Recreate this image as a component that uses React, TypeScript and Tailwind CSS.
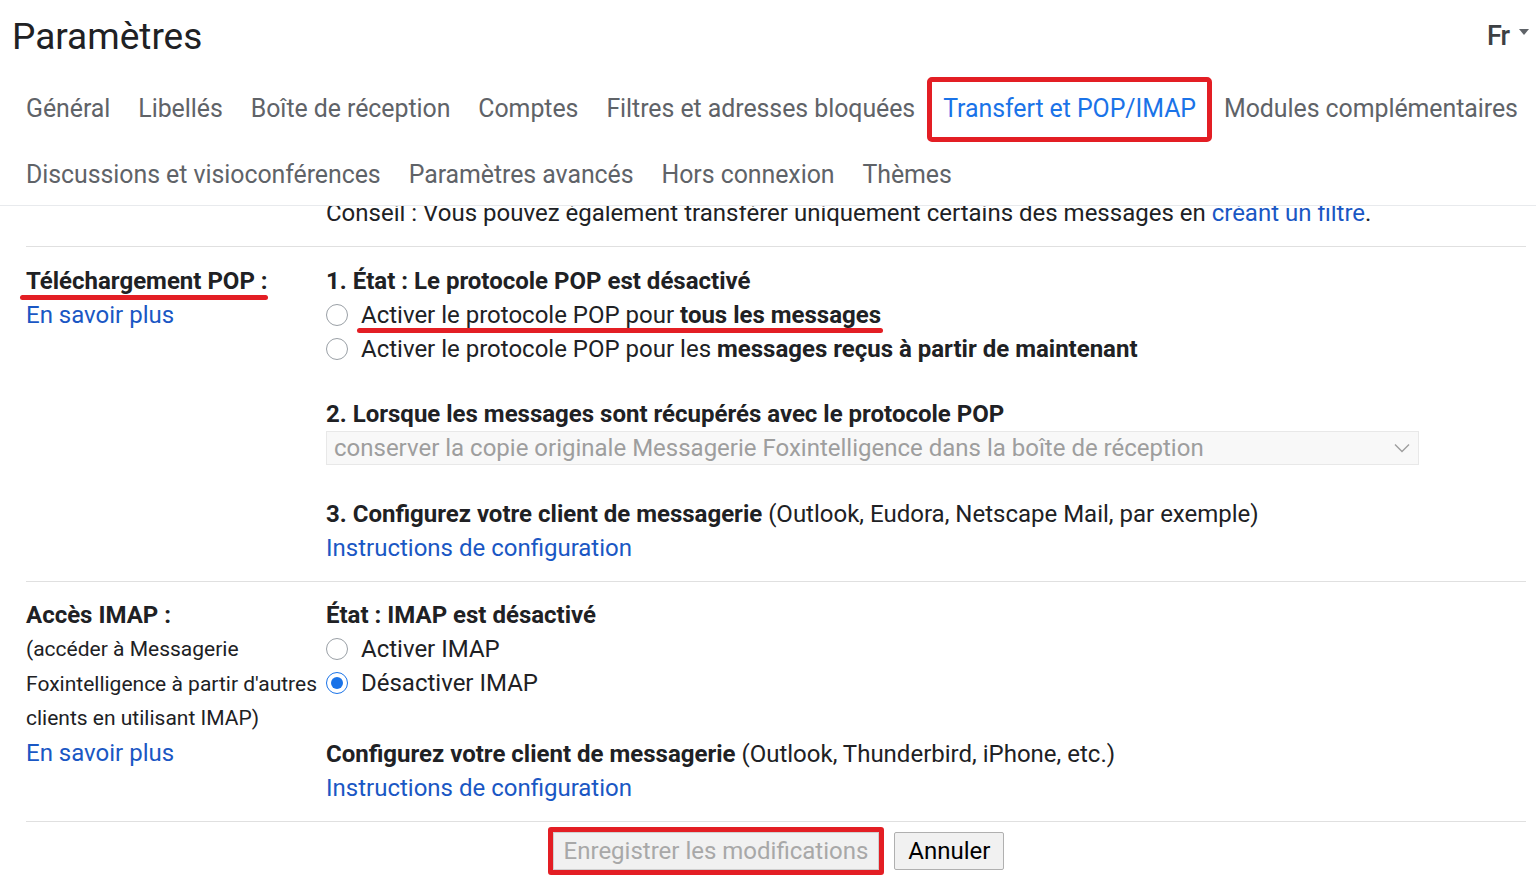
import React from "react";

const tabsRow1 = [
  "Général",
  "Libellés",
  "Boîte de réception",
  "Comptes",
  "Filtres et adresses bloquées",
  "Transfert et POP/IMAP",
  "Modules complémentaires",
];
const tabsRow2 = [
  "Discussions et visioconférences",
  "Paramètres avancés",
  "Hors connexion",
  "Thèmes",
];

function Radio({ checked = false }: { checked?: boolean }) {
  return (
    <span
      className={
        "mr-[13px] inline-flex h-[22px] w-[22px] shrink-0 items-center justify-center rounded-full border-[1.5px] " +
        (checked ? "border-[#1a73e8]" : "border-[#9aa0a6]")
      }
    >
      {checked && <span className="h-[12px] w-[12px] rounded-full bg-[#1a73e8]" />}
    </span>
  );
}

function Tab({ label, active = false }: { label: string; active?: boolean }) {
  return (
    <div className="flex h-[66px] shrink-0 items-start pt-[6px]">
      <span
        className={
          "h-[61px] whitespace-nowrap px-[14px] leading-[59px] " +
          (active
            ? "rounded-[3px] text-[#1a73e8] outline-[5px] outline-solid -outline-offset-[3px] outline-[#e31e24]"
            : "text-[#5f6368]")
        }
      >
        {label}
      </span>
    </div>
  );
}

export default function App() {
  return (
    <div className="min-h-screen bg-white font-['Roboto',sans-serif] text-[#202124]">
      {/* header */}
      <div className="relative z-10 flex h-[73px] items-center justify-between bg-white pl-[12px] pr-[7px] shadow-[0_2px_3px_rgba(0,0,0,0.12)]">
        <h1 className="text-[37px] leading-none text-[#202124]">Paramètres</h1>
        <div className="flex items-center gap-[10px] text-[#3c4043]">
          <span className="text-[27px] font-medium tracking-[-1px]">Fr</span>
          <span className="-mt-[10px] h-0 w-0 border-x-[5px] border-t-[6px] border-x-transparent border-t-[#5f6368]" />
        </div>
      </div>

      {/* tabs */}
      <div className="relative z-10 overflow-hidden border-b border-[#e8eaed] bg-white pl-[12px] text-[24.9px] tracking-[-0.05px]">
        <div className="flex flex-nowrap">
          {tabsRow1.map((t) => (
            <Tab key={t} label={t} active={t === "Transfert et POP/IMAP"} />
          ))}
        </div>
        <div className="flex flex-nowrap">
          {tabsRow2.map((t) => (
            <Tab key={t} label={t} />
          ))}
        </div>
      </div>

      {/* content */}
      <div className="h-[679px] overflow-hidden">
        <div className="-mt-[10px] pl-[26px] pr-[10px] text-[24px] leading-[34px]">
          <div className="pl-[300px] pb-[16px]">
            Conseil : Vous pouvez également transférer uniquement certains des messages en{" "}
            <span className="text-[#1a57c4]">créant un filtre</span>.
          </div>

          <div className="border-t border-[#e0e0e0]" />

          {/* POP */}
          <div className="flex pt-[17px] pb-[16px]">
            <div className="relative w-[300px] shrink-0">
              <div className="font-bold">Téléchargement POP :</div>
              <div className="absolute left-[-6px] top-[31px] h-[5px] w-[248px] rounded-full bg-[#e31e24]" />
              <div className="text-[#1a57c4]">En savoir plus</div>
            </div>
            <div className="flex-1">
              <div className="font-bold">1. État : Le protocole POP est désactivé</div>
              <div className="relative flex items-center">
                <Radio />
                <span>
                  Activer le protocole POP pour <b>tous les messages</b>
                </span>
                <div className="absolute left-[31px] top-[30px] h-[5px] w-[526px] rounded-full bg-[#e31e24]" />
              </div>
              <div className="flex items-center">
                <Radio />
                <span>
                  Activer le protocole POP pour les <b>messages reçus à partir de maintenant</b>
                </span>
              </div>

              <div className="mt-[31px] font-bold">
                2. Lorsque les messages sont récupérés avec le protocole POP
              </div>
              <div className="flex h-[34px] w-[1093px] items-center justify-between border border-[#e8e8e8] bg-[#f8f8f8] pl-[7px] pr-[8px] text-[#9e9e9e]">
                <span>conserver la copie originale Messagerie Foxintelligence dans la boîte de réception</span>
                <svg width="16" height="10" viewBox="0 0 16 10" fill="none" stroke="#9e9e9e" strokeWidth="1.4">
                  <path d="M1 1.5 8 8.5 15 1.5" />
                </svg>
              </div>

              <div className="mt-[32px]">
                <b>3. Configurez votre client de messagerie</b> (Outlook, Eudora, Netscape Mail, par exemple)
              </div>
              <div className="text-[#1a57c4]">Instructions de configuration</div>
            </div>
          </div>

          <div className="border-t border-[#e0e0e0]" />

          {/* IMAP */}
          <div className="flex pt-[16px] pb-[16px]">
            <div className="w-[300px] shrink-0">
              <div className="font-bold">Accès IMAP :</div>
              <div className="text-[21px] leading-[34.5px]">
                (accéder à Messagerie
                <br />
                Foxintelligence à partir d'autres
                <br />
                clients en utilisant IMAP)
              </div>
              <div className="text-[#1a57c4]">En savoir plus</div>
            </div>
            <div className="flex-1">
              <div className="font-bold">État : IMAP est désactivé</div>
              <div className="flex items-center">
                <Radio />
                <span>Activer IMAP</span>
              </div>
              <div className="flex items-center">
                <Radio checked />
                <span>Désactiver IMAP</span>
              </div>
              <div className="mt-[37px]">
                <b>Configurez votre client de messagerie</b> (Outlook, Thunderbird, iPhone, etc.)
              </div>
              <div className="text-[#1a57c4]">Instructions de configuration</div>
            </div>
          </div>

          <div className="border-t border-[#e0e0e0]" />

          {/* buttons */}
          <div className="flex items-center justify-center gap-[10px] pt-[5px]">
            <div className="rounded-[3px] border-[5px] border-[#e31e24]">
              <div className="border border-[#d0d0d0] bg-[#f1f1f1] px-[10px] py-[1px] text-[#a8a8a8]">
                Enregistrer les modifications
              </div>
            </div>
            <div className="rounded-[2px] border border-[#b0b0b0] bg-[#f1f1f1] px-[13px] py-[1px] text-black">
              Annuler
            </div>
          </div>
        </div>
      </div>
    </div>
  );
}
